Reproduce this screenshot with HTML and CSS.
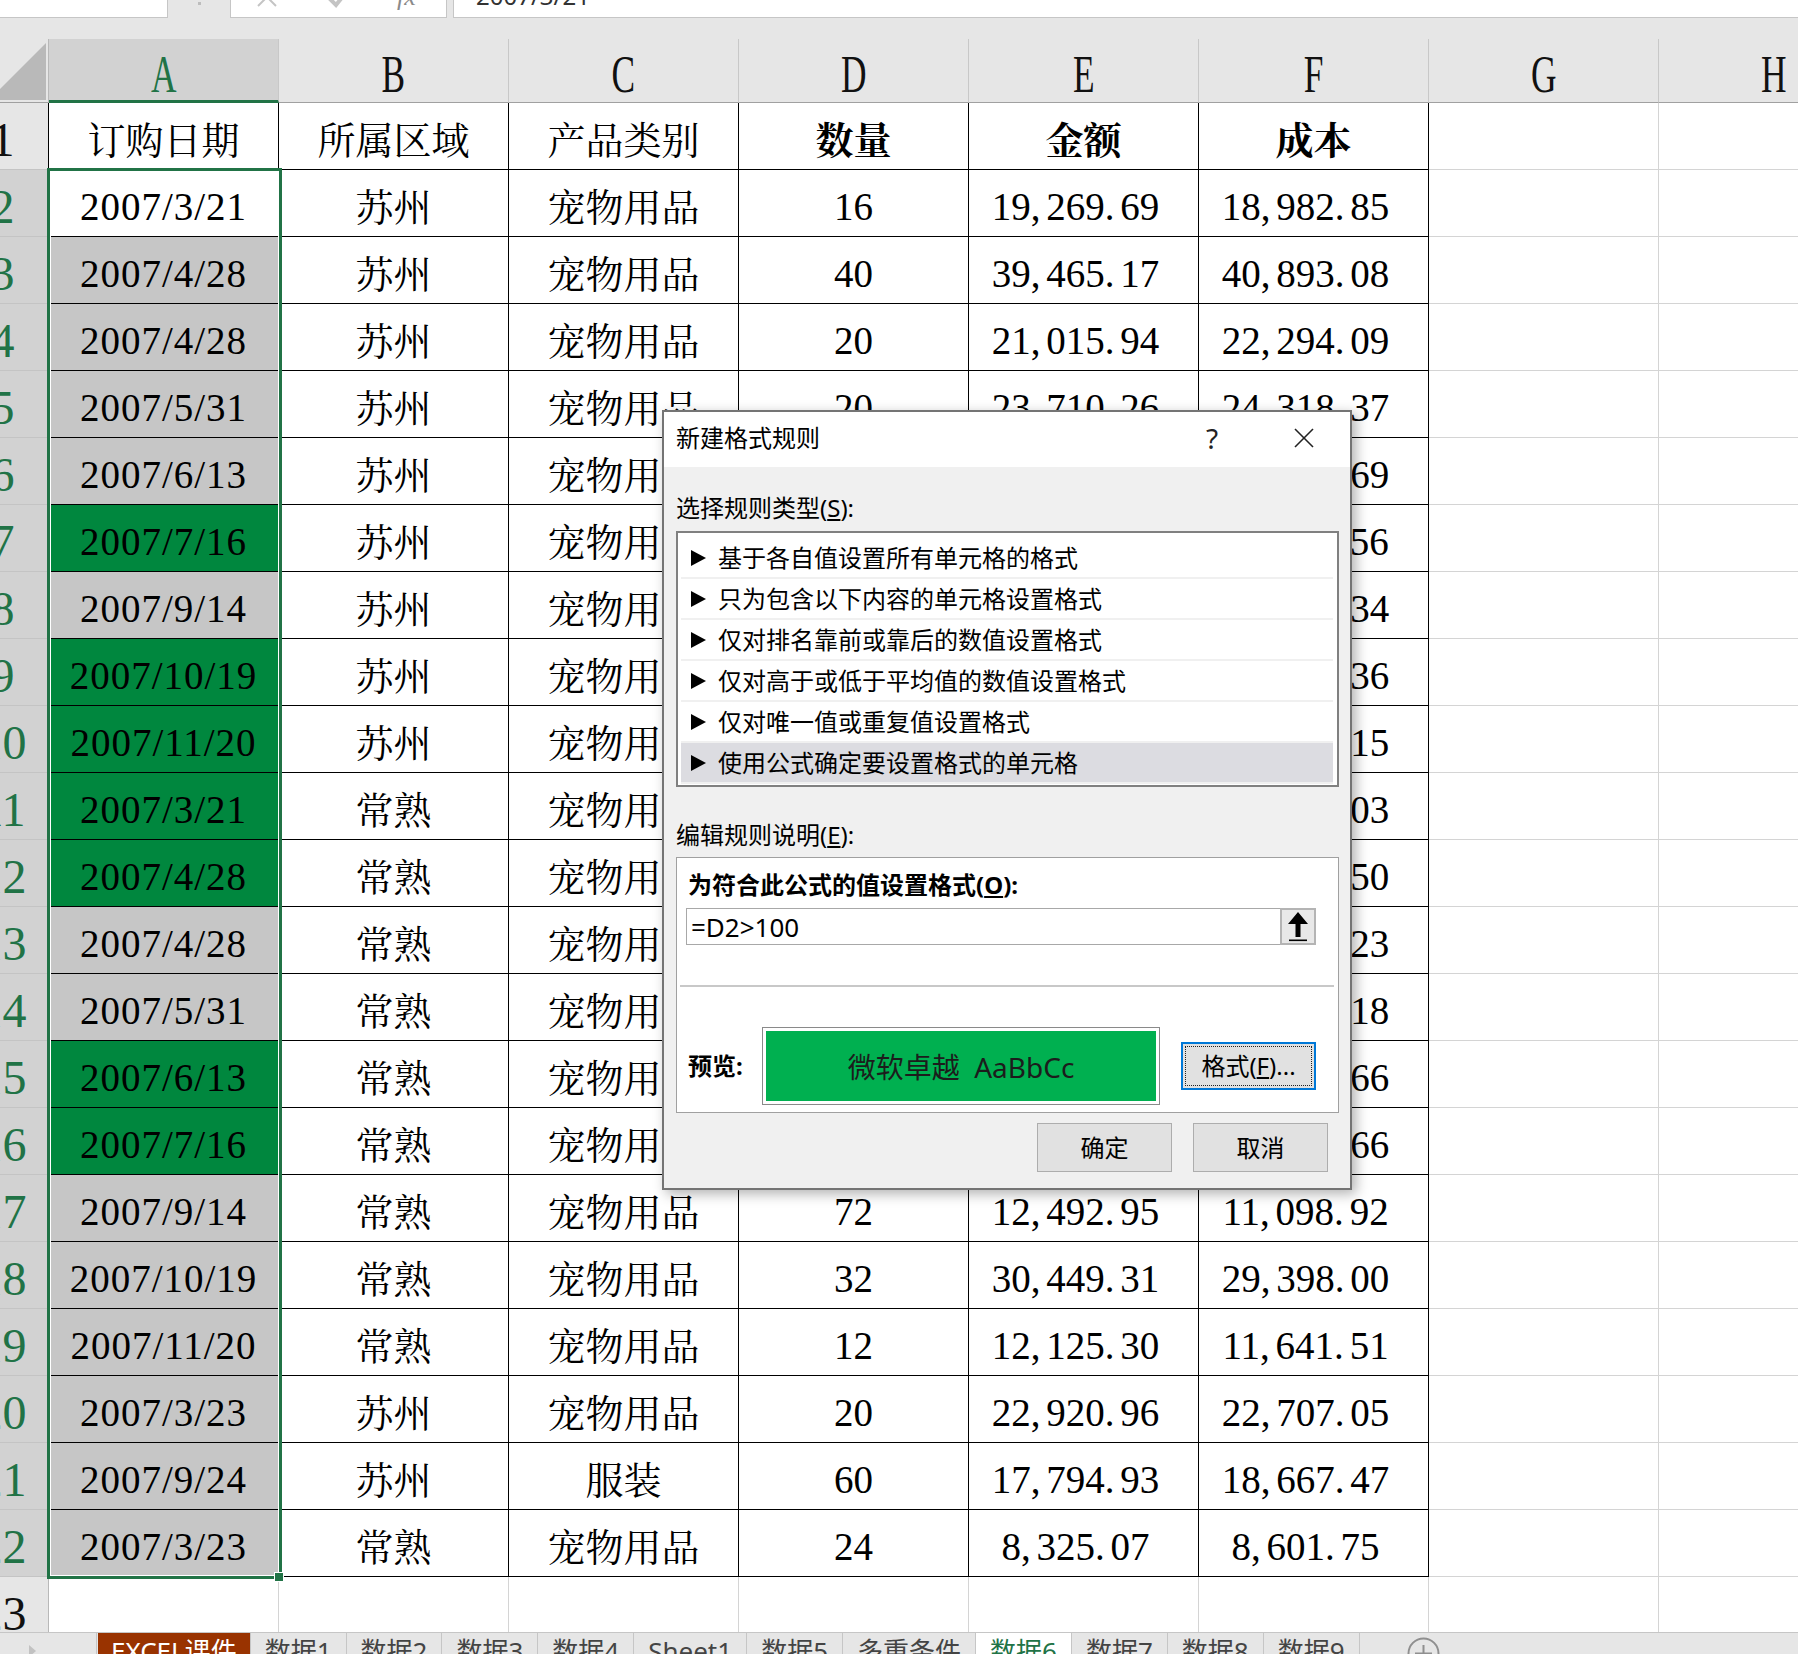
FILE: index.html
```html
<!DOCTYPE html>
<html lang="zh-CN">
<head>
<meta charset="utf-8">
<title>新建格式规则</title>
<link rel="stylesheet" href="styles.css">
</head>
<body>
<div class="app">
  <div class="fbar">
    <div class="namebox"></div>
    <div class="grip"><span></span></div>
    <div class="fbtns">
      <svg width="217" height="18" viewBox="0 0 217 18">
        <line x1="27" y1="-12" x2="45" y2="6" stroke="#c4c4c4" stroke-width="2"/>
        <line x1="45" y1="-12" x2="27" y2="6" stroke="#c4c4c4" stroke-width="2"/>
        <polyline points="92,-8 105,5 125,-20" fill="none" stroke="#c4c4c4" stroke-width="4"/>
        <text x="166" y="5" font-family="Liberation Serif" font-style="italic" font-size="26" fill="#8a8a8a">fx</text>
      </svg>
    </div>
    <div class="fbox"><span class="ftext">2007/3/21</span></div>
  </div>
  <div class="band"></div>
  <div class="sheet">
    <div class="corner"><svg width="92" height="63" viewBox="0 0 92 63"><polygon points="89,4 89,61 32,61" fill="#b9b9b9"/></svg></div>
    <div class="ch s"><span>A</span></div>
    <div class="ch"><span>B</span></div>
    <div class="ch"><span>C</span></div>
    <div class="ch"><span>D</span></div>
    <div class="ch"><span>E</span></div>
    <div class="ch"><span>F</span></div>
    <div class="ch"><span>G</span></div>
    <div class="ch"><span>H</span></div>

    <div class="rh">1</div><div class="c">订购日期</div><div class="c">所属区域</div><div class="c">产品类别</div><div class="c b">数量</div><div class="c b">金额</div><div class="c b">成本</div><div class="g"></div><div class="g"></div>

    <div class="rh s">2</div><div class="c d8">2007/3/21</div><div class="c">苏州</div><div class="c">宠物用品</div><div class="c n">16</div><div class="c n amt">19<i>,</i>269<i>.</i>69</div><div class="c n amt">18<i>,</i>982<i>.</i>85</div><div class="g"></div><div class="g"></div>

    <div class="rh s">3</div><div class="c d8 f1">2007/4/28</div><div class="c">苏州</div><div class="c">宠物用品</div><div class="c n">40</div><div class="c n amt">39<i>,</i>465<i>.</i>17</div><div class="c n amt">40<i>,</i>893<i>.</i>08</div><div class="g"></div><div class="g"></div>

    <div class="rh s">4</div><div class="c d8 f1">2007/4/28</div><div class="c">苏州</div><div class="c">宠物用品</div><div class="c n">20</div><div class="c n amt">21<i>,</i>015<i>.</i>94</div><div class="c n amt">22<i>,</i>294<i>.</i>09</div><div class="g"></div><div class="g"></div>

    <div class="rh s">5</div><div class="c d8 f1">2007/5/31</div><div class="c">苏州</div><div class="c">宠物用品</div><div class="c n">20</div><div class="c n amt">23<i>,</i>710<i>.</i>26</div><div class="c n amt">24<i>,</i>318<i>.</i>37</div><div class="g"></div><div class="g"></div>

    <div class="rh s">6</div><div class="c d8 f1">2007/6/13</div><div class="c">苏州</div><div class="c">宠物用品</div><div class="c n">30</div><div class="c n amt">27<i>,</i>655<i>.</i>18</div><div class="c n amt">26<i>,</i>983<i>.</i>69</div><div class="g"></div><div class="g"></div>

    <div class="rh s">7</div><div class="c d8 f2">2007/7/16</div><div class="c">苏州</div><div class="c">宠物用品</div><div class="c n">120</div><div class="c n amt">96<i>,</i>842<i>.</i>37</div><div class="c n amt">95<i>,</i>118<i>.</i>56</div><div class="g"></div><div class="g"></div>

    <div class="rh s">8</div><div class="c d8 f1">2007/9/14</div><div class="c">苏州</div><div class="c">宠物用品</div><div class="c n">28</div><div class="c n amt">24<i>,</i>331<i>.</i>62</div><div class="c n amt">23<i>,</i>789<i>.</i>34</div><div class="g"></div><div class="g"></div>

    <div class="rh s">9</div><div class="c d8 f2">2007/10/19</div><div class="c">苏州</div><div class="c">宠物用品</div><div class="c n">160</div><div class="c n amt">88<i>,</i>406<i>.</i>52</div><div class="c n amt">86<i>,</i>170<i>.</i>36</div><div class="g"></div><div class="g"></div>

    <div class="rh s">10</div><div class="c d8 f2">2007/11/20</div><div class="c">苏州</div><div class="c">宠物用品</div><div class="c n">140</div><div class="c n amt">74<i>,</i>903<i>.</i>48</div><div class="c n amt">73<i>,</i>226<i>.</i>15</div><div class="g"></div><div class="g"></div>

    <div class="rh s">11</div><div class="c d8 f2">2007/3/21</div><div class="c">常熟</div><div class="c">宠物用品</div><div class="c n">200</div><div class="c n amt">99<i>,</i>512<i>.</i>80</div><div class="c n amt">97<i>,</i>604<i>.</i>03</div><div class="g"></div><div class="g"></div>

    <div class="rh s">12</div><div class="c d8 f2">2007/4/28</div><div class="c">常熟</div><div class="c">宠物用品</div><div class="c n">180</div><div class="c n amt">91<i>,</i>237<i>.</i>14</div><div class="c n amt">89<i>,</i>845<i>.</i>50</div><div class="g"></div><div class="g"></div>

    <div class="rh s">13</div><div class="c d8 f1">2007/4/28</div><div class="c">常熟</div><div class="c">宠物用品</div><div class="c n">36</div><div class="c n amt">33<i>,</i>148<i>.</i>71</div><div class="c n amt">32<i>,</i>570<i>.</i>23</div><div class="g"></div><div class="g"></div>

    <div class="rh s">14</div><div class="c d8 f1">2007/5/31</div><div class="c">常熟</div><div class="c">宠物用品</div><div class="c n">48</div><div class="c n amt">45<i>,</i>620<i>.</i>09</div><div class="c n amt">44<i>,</i>381<i>.</i>18</div><div class="g"></div><div class="g"></div>

    <div class="rh s">15</div><div class="c d8 f2">2007/6/13</div><div class="c">常熟</div><div class="c">宠物用品</div><div class="c n">110</div><div class="c n amt">58<i>,</i>774<i>.</i>40</div><div class="c n amt">57<i>,</i>902<i>.</i>66</div><div class="g"></div><div class="g"></div>

    <div class="rh s">16</div><div class="c d8 f2">2007/7/16</div><div class="c">常熟</div><div class="c">宠物用品</div><div class="c n">150</div><div class="c n amt">67<i>,</i>310<i>.</i>85</div><div class="c n amt">66<i>,</i>054<i>.</i>66</div><div class="g"></div><div class="g"></div>

    <div class="rh s">17</div><div class="c d8 f1">2007/9/14</div><div class="c">常熟</div><div class="c">宠物用品</div><div class="c n">72</div><div class="c n amt">12<i>,</i>492<i>.</i>95</div><div class="c n amt">11<i>,</i>098<i>.</i>92</div><div class="g"></div><div class="g"></div>

    <div class="rh s">18</div><div class="c d8 f1">2007/10/19</div><div class="c">常熟</div><div class="c">宠物用品</div><div class="c n">32</div><div class="c n amt">30<i>,</i>449<i>.</i>31</div><div class="c n amt">29<i>,</i>398<i>.</i>00</div><div class="g"></div><div class="g"></div>

    <div class="rh s">19</div><div class="c d8 f1">2007/11/20</div><div class="c">常熟</div><div class="c">宠物用品</div><div class="c n">12</div><div class="c n amt">12<i>,</i>125<i>.</i>30</div><div class="c n amt">11<i>,</i>641<i>.</i>51</div><div class="g"></div><div class="g"></div>

    <div class="rh s">20</div><div class="c d8 f1">2007/3/23</div><div class="c">苏州</div><div class="c">宠物用品</div><div class="c n">20</div><div class="c n amt">22<i>,</i>920<i>.</i>96</div><div class="c n amt">22<i>,</i>707<i>.</i>05</div><div class="g"></div><div class="g"></div>

    <div class="rh s">21</div><div class="c d8 f1">2007/9/24</div><div class="c">苏州</div><div class="c">服装</div><div class="c n">60</div><div class="c n amt">17<i>,</i>794<i>.</i>93</div><div class="c n amt">18<i>,</i>667<i>.</i>47</div><div class="g"></div><div class="g"></div>

    <div class="rh s">22</div><div class="c d8 f1">2007/3/23</div><div class="c">常熟</div><div class="c">宠物用品</div><div class="c n">24</div><div class="c n amt">8<i>,</i>325<i>.</i>07</div><div class="c n amt">8<i>,</i>601<i>.</i>75</div><div class="g"></div><div class="g"></div>

    <div class="rh last">23</div><div class="g"></div><div class="g"></div><div class="g"></div><div class="g"></div><div class="g"></div><div class="g"></div><div class="g"></div><div class="g"></div>
  </div>
  <div class="tabs">
    <div class="tnav"><svg width="8" height="12" viewBox="0 0 8 12"><polygon points="0,0 7,6 0,12" fill="#c2c2c2"/></svg></div>
    <div class="tab first">EXCEL课件</div>
    <div class="tab">数据1</div>
    <div class="tab">数据2</div>
    <div class="tab">数据3</div>
    <div class="tab">数据4</div>
    <div class="tab">Sheet1</div>
    <div class="tab">数据5</div>
    <div class="tab">多重条件</div>
    <div class="tab active">数据6</div>
    <div class="tab">数据7</div>
    <div class="tab">数据8</div>
    <div class="tab">数据9</div>
    <div class="addtab"><svg width="33" height="33" viewBox="0 0 33 33"><circle cx="16.5" cy="16.5" r="15" fill="none" stroke="#8f8f8f" stroke-width="2"/><line x1="16.5" y1="8" x2="16.5" y2="25" stroke="#8f8f8f" stroke-width="2"/><line x1="8" y1="16.5" x2="25" y2="16.5" stroke="#8f8f8f" stroke-width="2"/></svg></div>
  </div>
</div>

<div class="selbox"></div>
<div class="handle"></div>

<div class="dialog">
  <div class="dtitle">
    <span class="dtt">新建格式规则</span>
    <span class="help">?</span>
    <svg class="close" width="20" height="20" viewBox="0 0 20 20"><line x1="1" y1="1" x2="19" y2="19" stroke="#222" stroke-width="1.6"/><line x1="19" y1="1" x2="1" y2="19" stroke="#222" stroke-width="1.6"/></svg>
  </div>
  <div class="dbody">
    <div class="lbl">选择规则类型(<u>S</u>):</div>
    <div class="list">
      <div class="item"><svg width="17" height="16" viewBox="0 0 17 16"><polygon points="1,0 16,8 1,16" fill="#000"/></svg>基于各自值设置所有单元格的格式</div>
      <div class="item"><svg width="17" height="16" viewBox="0 0 17 16"><polygon points="1,0 16,8 1,16" fill="#000"/></svg>只为包含以下内容的单元格设置格式</div>
      <div class="item"><svg width="17" height="16" viewBox="0 0 17 16"><polygon points="1,0 16,8 1,16" fill="#000"/></svg>仅对排名靠前或靠后的数值设置格式</div>
      <div class="item"><svg width="17" height="16" viewBox="0 0 17 16"><polygon points="1,0 16,8 1,16" fill="#000"/></svg>仅对高于或低于平均值的数值设置格式</div>
      <div class="item"><svg width="17" height="16" viewBox="0 0 17 16"><polygon points="1,0 16,8 1,16" fill="#000"/></svg>仅对唯一值或重复值设置格式</div>
      <div class="item on"><svg width="17" height="16" viewBox="0 0 17 16"><polygon points="1,0 16,8 1,16" fill="#000"/></svg>使用公式确定要设置格式的单元格</div>
    </div>
    <div class="lbl lbl2">编辑规则说明(<u>E</u>):</div>
    <div class="panel">
      <div class="blbl">为符合此公式的值设置格式(<u>O</u>):</div>
      <div class="input">
        <span class="itext">=D2&gt;100</span>
        <div class="collapse"><svg width="20" height="30" viewBox="0 0 20 30"><polygon points="10,0 0,12 7.5,12 7.5,25 12.5,25 12.5,12 20,12" fill="#000"/><rect x="1" y="27.5" width="18" height="1.6" fill="#000"/></svg></div>
      </div>
      <div class="sep"></div>
      <div class="prow">
        <span class="plbl">预览:</span>
        <div class="preview"><div class="pfill">微软卓越  AaBbCc</div></div>
        <div class="fmt"><span>格式(<u>F</u>)...</span></div>
      </div>
    </div>
    <div class="actions">
      <div class="btn">确定</div>
      <div class="btn">取消</div>
    </div>
  </div>
</div>
</body>
</html>
```
FILE: styles.css
```css
* { box-sizing: border-box; }
html, body { margin: 0; padding: 0; }
body {
  width: 1798px;
  height: 1654px;
  overflow: hidden;
  position: relative;
  background: #fff;
  font-family: "Noto Sans", "Noto Sans CJK SC", sans-serif;
}
.app {
  width: 1798px;
  height: 1654px;
  display: flex;
  flex-direction: column;
  overflow: hidden;
}

/* formula bar (cut at top) */
.fbar {
  flex: none;
  height: 18px;
  display: flex;
  background: #e6e6e6;
  overflow: hidden;
}
.namebox {
  width: 168px;
  background: #fff;
  border-right: 1px solid #c6c6c6;
  border-bottom: 1px solid #c6c6c6;
}
.grip {
  width: 62px;
  display: flex;
  justify-content: center;
}
.grip span {
  width: 3px;
  height: 3px;
  margin-top: 2px;
  background: #bdbdbd;
}
.fbtns {
  width: 217px;
  background: #fff;
  border-left: 1px solid #c6c6c6;
  border-right: 1px solid #c6c6c6;
  border-bottom: 1px solid #c6c6c6;
}
.fbtns svg { display: block; }
.fbox {
  flex: 1;
  margin-left: 6px;
  background: #fff;
  border-left: 1px solid #c6c6c6;
  border-bottom: 1px solid #c6c6c6;
  padding-left: 22px;
}
.ftext {
  display: block;
  font-size: 24px;
  line-height: 30px;
  margin-top: -19px;
  color: #333;
}
.band {
  flex: none;
  height: 21px;
  background: #e6e6e6;
}

/* sheet grid */
.sheet {
  flex: 1;
  min-height: 0;
  margin-left: -43px;
  overflow: hidden;
  display: grid;
  grid-template-columns: 92px repeat(8, 230px);
  grid-template-rows: 64px repeat(23, 67px);
}
.corner {
  background: #e6e6e6;
  border-right: 1px solid #b8b8b8;
  border-bottom: 1px solid #a0a0a0;
}
.corner svg { display: block; }
.ch {
  background: #e6e6e6;
  border-right: 1px solid #c8c8c8;
  border-bottom: 1px solid #a0a0a0;
  text-align: center;
  font-family: "Liberation Serif", serif;
  font-size: 52px;
  line-height: 52px;
  padding-top: 10px;
  color: #111;
}
.ch span {
  display: inline-block;
  transform: scaleX(0.68);
}
.ch.s {
  background: #d2d2d2;
  color: #217346;
  border-bottom: 3px solid #217346;
}
.rh {
  background: #e6e6e6;
  border-right: 1px solid #000;
  border-bottom: 1px solid #c4c4c4;
  text-align: center;
  font-family: "Liberation Serif", serif;
  font-size: 48px;
  line-height: 48px;
  padding-top: 13px;
  color: #111;
}
.rh.s {
  background: #d2d2d2;
  color: #217346;
}
.rh.last { border-right-color: #b8b8b8; }
.c, .g {
  display: flex;
  align-items: center;
  justify-content: center;
  padding-top: 3px;
  font-family: "Liberation Serif", "Noto Serif CJK SC", "Noto Sans CJK SC", serif;
  font-size: 38px;
  color: #000;
  white-space: nowrap;
  overflow: hidden;
}
.c {
  border-right: 1px solid #000;
  border-bottom: 1px solid #000;
}
.g {
  border-right: 1px solid #d4d4d4;
  border-bottom: 1px solid #d4d4d4;
}
.n { font-size: 39px; padding-top: 7px; }
.d8 { font-size: 39px; letter-spacing: 1px; padding-top: 7px; }
.amt { padding-right: 16px; }
.c i {
  font-style: normal;
  display: inline-block;
  width: 0.4em;
}
.b { font-weight: bold; }
.f1 { background: #c6c6c6; }
.f2 { background: #00873e; }

/* selection overlay */
.selbox {
  position: absolute;
  left: 47px;
  top: 168px;
  width: 235px;
  height: 1411px;
  border: 3px solid #217346;
  box-shadow: inset 0 0 0 1px #fff;
  pointer-events: none;
}
.handle {
  position: absolute;
  left: 274px;
  top: 1572px;
  width: 10px;
  height: 10px;
  background: #217346;
  border: 1px solid #fff;
}

/* sheet tabs */
.tabs {
  flex: none;
  height: 22px;
  display: flex;
  background: #e6e6e6;
  border-top: 1px solid #c6c6c6;
  overflow: hidden;
  font-family: "Noto Sans", "Noto Sans CJK SC", sans-serif;
  font-size: 26px;
  line-height: 30px;
  color: #444;
}
.tnav {
  width: 97px;
  padding: 12px 0 0 29px;
  border-right: 1px solid #c6c6c6;
}
.tnav svg { display: block; }
.tab {
  padding: 3px 14px 0 14px;
  border-right: 1px solid #c6c6c6;
  white-space: nowrap;
}
.tab.first {
  background: #993300;
  color: #fff;
  margin-left: 1px;
  padding: 3px 13px 0 13px;
}
.tab.active {
  background: #fff;
  color: #217346;
}
.addtab {
  margin-left: 47px;
  padding-top: 4px;
}
.addtab svg { display: block; }

/* dialog */
.dialog {
  position: absolute;
  left: 662px;
  top: 410px;
  width: 690px;
  height: 780px;
  border: 2px solid #747474;
  background: #f0f0f0;
  box-shadow: 4px 4px 12px rgba(0, 0, 0, 0.3);
  font-family: "Noto Sans", "Noto Sans CJK SC", sans-serif;
  font-size: 24px;
  color: #000;
}
.dtitle {
  height: 55px;
  background: #fff;
  display: flex;
  align-items: center;
  padding-left: 12px;
  padding-bottom: 3px;
}
.dtt { flex: 1; line-height: 30px; }
.help {
  width: 30px;
  text-align: center;
  margin-right: 67px;
  line-height: 30px;
  font-size: 28px;
  color: #222;
}
.close {
  display: block;
  margin-right: 36px;
}
.dbody { padding: 0 11px 0 12px; }
.lbl {
  line-height: 30px;
  margin-top: 26px;
}
.lbl2 { margin-top: 33px; }
.list {
  margin-top: 8px;
  height: 256px;
  border: 2px solid #808080;
  background: #fff;
  padding: 5px 4px 0 3px;
}
.item {
  height: 41px;
  border-bottom: 2px solid #f0f0f0;
  display: flex;
  align-items: center;
  padding-left: 9px;
  line-height: 39px;
  white-space: nowrap;
}
.item svg {
  display: block;
  margin-right: 11px;
}
.item.on { background: #dcdce1; }
.panel {
  margin-top: 7px;
  height: 256px;
  border: 1px solid #a0a0a0;
  background: #fff;
  padding-top: 12px;
}
.blbl {
  line-height: 30px;
  margin-left: 11px;
  font-weight: bold;
}
.input {
  margin: 8px 0 0 9px;
  width: 630px;
  height: 37px;
  border: 1px solid #a8a8a8;
  display: flex;
  align-items: center;
  background: #fff;
}
.itext {
  flex: 1;
  padding-left: 4px;
  line-height: 30px;
  font-size: 26px;
}
.collapse {
  width: 36px;
  height: 37px;
  margin: -1px -1px -1px 0;
  border: 2px solid #b4b4b4;
  background: #e8e8e8;
  display: flex;
  align-items: center;
  justify-content: center;
}
.collapse svg { display: block; }
.sep {
  margin: 40px 4px 0 3px;
  height: 2px;
  background: #c8c8c8;
}
.prow {
  margin-top: 40px;
  height: 78px;
  display: flex;
  align-items: center;
  padding-left: 11px;
}
.plbl {
  width: 74px;
  font-weight: bold;
  line-height: 30px;
}
.preview {
  width: 398px;
  height: 78px;
  border: 1px solid #8a8a8a;
  padding: 3px;
  background: #fff;
}
.pfill {
  height: 100%;
  background: #00b050;
  display: flex;
  align-items: center;
  justify-content: center;
  font-size: 28px;
  color: #1c1c1c;
  white-space: pre;
}
.fmt {
  margin-left: 21px;
  width: 135px;
  height: 48px;
  border: 2px solid #0078d7;
  background: #e1e1e1;
  padding: 2px;
}
.fmt span {
  display: flex;
  height: 100%;
  align-items: center;
  justify-content: center;
  border: 1px dotted #222;
  line-height: 30px;
}
.actions {
  display: flex;
  justify-content: flex-end;
  gap: 21px;
  margin-top: 10px;
  padding-right: 11px;
}
.btn {
  width: 135px;
  height: 49px;
  border: 1px solid #adadad;
  background: #e1e1e1;
  display: flex;
  align-items: center;
  justify-content: center;
  line-height: 30px;
}
```
